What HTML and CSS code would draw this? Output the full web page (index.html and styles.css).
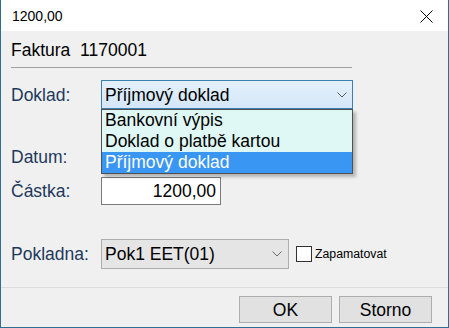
FILE: index.html
```html
<!DOCTYPE html>
<html lang="cs">
<head>
<meta charset="utf-8">
<title>1200,00</title>
<link rel="stylesheet" href="styles.css">
</head>
<body>
<div class="window">
  <div class="titlebar">
    <span class="title">1200,00</span>
    <svg class="close" width="13" height="13" viewBox="0 0 13 13"><path d="M0.5 0.5 L12.5 12.5 M12.5 0.5 L0.5 12.5" stroke="#000" stroke-width="1" fill="none"/></svg>
  </div>
  <div class="content">
    <div class="header">Faktura&nbsp;&nbsp;1170001</div>
    <div class="sep"></div>
    <div class="row row-doklad">
      <span class="label">Doklad:</span>
      <div class="combo combo-active">
        <span class="combo-text">Příjmový doklad</span>
        <svg class="chev" width="10" height="6" viewBox="0 0 10 6"><path d="M0.5 0.5 L5 5 L9.5 0.5" stroke="#5a5a5a" stroke-width="1" fill="none"/></svg>
        <ul class="droplist">
          <li>Bankovní výpis</li>
          <li>Doklad o platbě kartou</li>
          <li class="sel">Příjmový doklad</li>
        </ul>
      </div>
    </div>
    <div class="row row-datum">
      <span class="label">Datum:</span>
      <div class="field field-date"></div>
    </div>
    <div class="row row-castka">
      <span class="label">Částka:</span>
      <div class="field field-amount">1200,00</div>
    </div>
    <div class="row row-pokladna">
      <span class="label">Pokladna:</span>
      <div class="combo combo-plain">
        <span class="combo-text">Pok1 EET(01)</span>
        <svg class="chev" width="10" height="6" viewBox="0 0 10 6"><path d="M0.5 0.5 L5 5 L9.5 0.5" stroke="#6a6a6a" stroke-width="1" fill="none"/></svg>
      </div>
      <span class="checkbox"></span>
      <span class="check-label">Zapamatovat</span>
    </div>
  </div>
  <div class="footer">
    <div class="btn">OK</div>
    <div class="btn">Storno</div>
  </div>
</div>
</body>
</html>
```
FILE: styles.css
```css
* { box-sizing: border-box; }
html, body { margin: 0; padding: 0; }
body {
  width: 449px;
  height: 328px;
  overflow: hidden;
  font-family: "Liberation Sans", Arial, sans-serif;
  background: #f0f0f0;
}
.window {
  width: 449px;
  height: 328px;
  display: flex;
  flex-direction: column;
  border: 1px solid #2f6e93;
  border-top: none;
  background: #f0f0f0;
}
.titlebar {
  height: 31px;
  flex: none;
  background: #ffffff;
  display: flex;
  align-items: center;
  justify-content: space-between;
  padding: 0 15px 0 11px;
}
.title {
  font-size: 14px;
  line-height: 16px;
  color: #000;
  margin-top: 1px;
}
.close { display: block; margin-top: 2px; }
.content {
  flex: 1;
  padding: 9px 0 0 10px;
}
.header {
  font-size: 17.5px;
  line-height: 20px;
  height: 20px;
  color: #000;
  white-space: nowrap;
}
.sep {
  margin-top: 7px;
  width: 341px;
  height: 1px;
  background: #a0a0a0;
}
.row {
  display: flex;
  align-items: center;
}
.label {
  width: 90px;
  flex: none;
  font-size: 17.5px;
  line-height: 20px;
  color: #1e395b;
}
.row-doklad { margin-top: 12px; height: 29px; }
.row-datum { margin-top: 34px; height: 28px; }
.row-castka { margin-top: 6px; height: 28px; }
.row-pokladna { margin-top: 34px; height: 30px; }
.combo {
  position: relative;
  height: 100%;
  display: flex;
  align-items: center;
  justify-content: space-between;
  padding: 0 5px 0 3px;
  font-size: 17.5px;
  line-height: 20px;
  color: #000;
}
.combo-active {
  width: 252px;
  background: linear-gradient(#e3effb, #d5e7f8);
  border: 1px solid #3c7fb1;
}
.combo-plain {
  width: 188px;
  background: #e5e5e5;
  border: 1px solid #adadad;
  padding-right: 6px;
}
.chev { display: block; }
.droplist {
  position: absolute;
  left: -1px;
  top: 28px;
  width: 252px;
  margin: 0;
  padding: 0;
  list-style: none;
  background: #dff7f5;
  border: 1px solid #505050;
  box-shadow: 3px 3px 3px rgba(0, 0, 0, 0.25);
  z-index: 5;
}
.droplist li {
  height: 21px;
  line-height: 21px;
  padding-left: 3px;
  font-size: 17.5px;
  color: #000;
  white-space: nowrap;
}
.droplist li.sel {
  background: #3a96f3;
  color: #fff;
}
.field {
  height: 100%;
  background: #fff;
  border: 1px solid #7a7a7a;
  font-size: 17.5px;
  line-height: 20px;
  color: #000;
}
.field-date { width: 120px; }
.field-amount {
  width: 120px;
  display: flex;
  align-items: center;
  justify-content: flex-end;
  padding-right: 4px;
}
.checkbox {
  width: 16px;
  height: 16px;
  margin-left: 7px;
  background: #fff;
  border: 1px solid #333;
  flex: none;
}
.check-label {
  margin-left: 3px;
  font-size: 12.3px;
  line-height: 14px;
  color: #000;
}
.footer {
  flex: none;
  height: 40px;
  border-top: 1px solid #dcdcdc;
  display: flex;
  justify-content: flex-end;
  align-items: flex-start;
  gap: 7px;
  padding: 8px 16px 0 0;
}
.btn {
  width: 93px;
  height: 27px;
  background: #e1e1e1;
  border: 1px solid #adadad;
  display: flex;
  align-items: center;
  justify-content: center;
  font-size: 17.5px;
  line-height: 20px;
  color: #000;
}
```
